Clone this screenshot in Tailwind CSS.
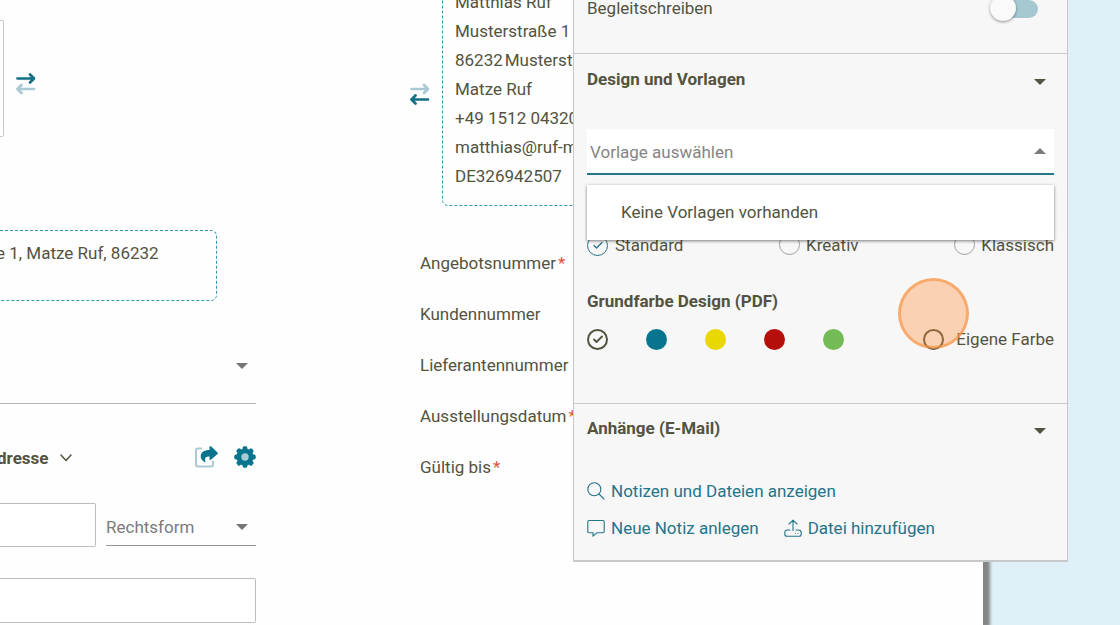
<!DOCTYPE html>
<html lang="de">
<head>
<meta charset="utf-8">
<title>Angebot erstellen</title>
<script src="https://cdn.jsdelivr.net/npm/@tailwindcss/browser@4"></script>
</head>
<body class="relative h-screen overflow-hidden bg-[#dff0f8] font-[Roboto,sans-serif] text-[17px] leading-6 text-[#53533f]">

<main class="mr-[137px] flex h-full items-start bg-[#fefefe] shadow-[5px_0_3px_2px_#858585]">

  <!-- Absender und Adresse -->
  <section class="w-64 shrink-0 pt-5">
    <div class="flex items-center gap-3">
      <div class="h-[117px] w-1 rounded-r-xs border border-l-0 border-[#c8c8c8]"></div>
      <button type="button" aria-label="Nach rechts übernehmen" class="mt-[10px]">
        <svg class="h-6 w-5" viewBox="0 0 20 24" fill="none" stroke-width="2.7" stroke-linecap="round" stroke-linejoin="round">
          <path stroke="#137087" d="M1.500 6.500H17.500M14 2.500L18 6.500L14 10.500"/>
          <path stroke="#a9c9d3" d="M18 17H2.500M5.500 13L1.500 17L5.500 21"/>
        </svg>
      </button>
    </div>
    <div class="mt-[93px] mr-[39px] h-[71px] rounded-r-md border border-l-0 border-dashed border-[#3397ae] pt-[10px] whitespace-nowrap"><div class="-ml-1">e 1, Matze Ruf, 86232</div></div>

    <div class="mt-7 grid items-center border-b border-[#b5b5b5]">
      <select aria-label="Absender" class="col-start-1 row-start-1 h-[74px] w-full appearance-none outline-none"><option></option></select>
      <svg class="pointer-events-none col-start-1 row-start-1 mr-2 h-[6px] w-3 justify-self-end" viewBox="0 0 12 6" fill="#757575"><path d="M0 0H12L6 6Z"/></svg>
    </div>

    <div class="mt-[38px] flex h-[30px] items-center">
      <button type="button" class="-ml-[3px] flex items-center gap-3 pt-[2px] font-bold">dresse
        <svg class="h-2 w-3" viewBox="0 0 12 8" fill="none" stroke="#53533f" stroke-width="1.500" stroke-linecap="round" stroke-linejoin="round"><path d="M1 1L6 6.500L11 1"/></svg>
      </button>
      <button type="button" aria-label="Teilen" class="mr-4 ml-auto">
        <svg class="h-[22px] w-6" viewBox="0 0 24 22" fill="none">
          <path d="M7 2.500H4Q2 2.500 2 4.500V18.500Q2 20.500 4 20.500H17Q19 20.500 19 18.500V15.500" stroke="#a9c9d3" stroke-width="2" stroke-linecap="round"/>
          <path d="M15.500 1.200C15.500 .4 16.500 0 17.200 .6L23.500 6.400C24 6.900 24 7.600 23.500 8L17.200 13.600C16.500 14.200 15.500 13.800 15.500 13V10.600C12 10.600 10.300 11.600 11.400 15.400C11.600 16 10.900 16.400 10.400 16C8.200 14.600 6.500 12.600 6.700 10C7 6 10.500 4.200 15.500 4.100Z" fill="#06758d"/>
        </svg>
      </button>
      <button type="button" aria-label="Einstellungen">
        <svg class="size-[22px]" viewBox="0 0 22 22">
          <g fill="#06758d">
            <circle cx="11" cy="11" r="8.600"/>
            <g id="teeth"><rect x="8.600" y="0.300" width="4.800" height="21.400" rx="1.600"/><rect x="0.300" y="8.600" width="21.400" height="4.800" rx="1.600"/></g>
            <use href="#teeth" transform="rotate(45 11 11)"/>
          </g>
          <circle cx="11" cy="11" r="3.700" fill="#a9c9d3"/>
        </svg>
      </button>
    </div>

    <div class="mt-[31px] flex gap-[10px]">
      <input type="text" aria-label="Firma" class="h-11 w-24 rounded-r-xs border border-l-0 border-[#bcbcbc] bg-white outline-none">
      <div class="grid h-[43px] flex-1 items-center border-b border-[#949494]">
        <select aria-label="Rechtsform" class="col-start-1 row-start-1 h-full w-full appearance-none pt-[6px] text-[#7b7b7b] outline-none"><option>Rechtsform</option></select>
        <svg class="pointer-events-none col-start-1 row-start-1 mt-[5px] mr-2 h-[6px] w-3 justify-self-end" viewBox="0 0 12 6" fill="#757575"><path d="M0 0H12L6 6Z"/></svg>
      </div>
    </div>
    <input type="text" aria-label="Name" class="mt-[31px] h-[45px] w-full rounded-r-xs border border-l-0 border-[#bcbcbc] bg-white outline-none">
  </section>

  <!-- Kundendaten und Angebotsangaben -->
  <section class="ml-[154px] flex-1 whitespace-nowrap">
    <div class="flex items-start gap-3">
      <button type="button" aria-label="Nach links übernehmen" class="mt-[82px]">
        <svg class="h-6 w-5" viewBox="0 0 20 24" fill="none" stroke-width="2.7" stroke-linecap="round" stroke-linejoin="round">
          <path stroke="#a9c9d3" d="M1.500 7H17.500M14 3L18 7L14 11"/>
          <path stroke="#137087" d="M18 17.500H2.500M5.500 13.500L1.500 17.500L5.500 21.500"/>
        </svg>
      </button>
      <address class="-mt-6 flex-1 rounded-md border border-dashed border-[#3397ae] px-3 pt-[11px] pb-[14px] leading-[29px] not-italic">
        Matthias Ruf<br>Musterstraße 1<br>86232<span class="ml-[2px]">Musterstadt</span><br>Matze Ruf<br>+49 1512 0432058<br>matthias@ruf-mail.de<br>DE326942507
      </address>
    </div>
    <ul class="mt-8 ml-[10px] leading-[51px]">
      <li>Angebotsnummer<span class="ml-[2px] text-[#e0523f]">*</span></li>
      <li>Kundennummer</li>
      <li>Lieferantennummer</li>
      <li>Ausstellungsdatum<span class="ml-[2px] text-[#e0523f]">*</span></li>
      <li>Gültig bis<span class="ml-[2px] text-[#e0523f]">*</span></li>
    </ul>
  </section>
</main>

<!-- Einstellungsmenü -->
<aside class="absolute top-0 right-[52px] w-[495px] border border-t-0 border-b-2 border-[#c6c8c9] bg-[#f7f7f7]">
  <section class="flex h-[54px] items-start border-b border-[#c6c8c9] px-[13px]">
    <label for="letter" class="-mt-1">Begleitschreiben</label>
    <input id="letter" type="checkbox" class="relative mr-4 ml-auto h-[18px] w-9 appearance-none rounded-full bg-[#a6c8d1] before:absolute before:-top-[5px] before:-left-3 before:size-[26px] before:rounded-full before:bg-[#fafafa] before:shadow-[0_1px_3px_#0000006b]">
  </section>

  <section class="border-b border-[#c6c8c9] px-[13px] pt-[13px] pb-[52px]">
    <button type="button" class="flex w-full items-center justify-between pr-2 font-bold">Design und Vorlagen
      <svg class="mt-[5px] h-[6px] w-3" viewBox="0 0 12 6" fill="#53533f"><path d="M0 0H12L6 6Z"/></svg>
    </button>
    <div class="relative mt-[38px] grid h-[46px] items-center border-b-2 border-[#24748a] bg-white">
      <select aria-label="Vorlage" class="col-start-1 row-start-1 h-full w-full appearance-none pl-[3px] pt-px text-[#858585] outline-none"><option>Vorlage auswählen</option></select>
      <svg class="pointer-events-none col-start-1 row-start-1 mr-2 h-[6px] w-3 justify-self-end" viewBox="0 0 12 6" fill="#7c7c7c"><path d="M0 6H12L6 0Z"/></svg>
      <ul role="listbox" aria-label="Vorlagen" class="absolute inset-x-0 top-14 z-10 bg-white shadow-[0_1px_3px_#00000080]">
        <li role="option" aria-selected="false" class="px-[34px] pt-[15px] pb-4">Keine Vorlagen vorhanden</li>
      </ul>
    </div>

    <div class="mt-[58px] flex items-center justify-between">
      <label class="flex items-center gap-[7px]">
        <span class="grid place-items-center *:col-start-1 *:row-start-1">
          <input type="radio" name="design" checked class="size-[21px] appearance-none rounded-full border border-[#24748a]">
          <svg class="pointer-events-none h-2 w-[10px]" viewBox="0 0 10 8" fill="none" stroke="#24748a" stroke-width="1.300" stroke-linecap="round" stroke-linejoin="round"><path d="M1 4.500L3.500 7L9 1.500"/></svg>
        </span>Standard</label>
      <label class="flex items-center gap-[6px]"><input type="radio" name="design" class="mb-[2px] size-[21px] appearance-none rounded-full border border-[#a0a0a0]">Kreativ</label>
      <label class="flex items-center gap-[6px]"><input type="radio" name="design" class="mb-[2px] size-[21px] appearance-none rounded-full border border-[#a0a0a0]">Klassisch</label>
    </div>

    <fieldset class="mt-8">
      <legend class="font-bold">Grundfarbe Design (PDF)</legend>
      <div class="mt-[14px] flex items-center gap-[38px]">
        <span class="grid place-items-center *:col-start-1 *:row-start-1">
          <input type="radio" name="color" checked aria-label="Standardfarbe" class="size-[21px] appearance-none rounded-full border-2 border-[#53533f]">
          <svg class="pointer-events-none h-2 w-[10px]" viewBox="0 0 10 8" fill="none" stroke="#53533f" stroke-width="1.800" stroke-linecap="round" stroke-linejoin="round"><path d="M1 4.500L3.500 7L9 1.500"/></svg>
        </span>
        <input type="radio" name="color" aria-label="Blau" class="size-[21px] appearance-none rounded-full bg-[#06758d]">
        <input type="radio" name="color" aria-label="Gelb" class="size-[21px] appearance-none rounded-full bg-[#e8d800]">
        <input type="radio" name="color" aria-label="Rot" class="size-[21px] appearance-none rounded-full bg-[#b40f0a]">
        <input type="radio" name="color" aria-label="Grün" class="size-[21px] appearance-none rounded-full bg-[#72bb55]">
        <label class="relative ml-auto flex items-center gap-3"><input type="radio" name="color" class="size-[21px] appearance-none rounded-full border-2 border-[#53533f]">Eigene Farbe
          <span class="pointer-events-none absolute -top-[49px] -left-[25px] size-[71px] rounded-full border-[3px] border-[#f79646]/65 bg-[#ff8a33]/35"></span>
        </label>
      </div>
    </fieldset>
  </section>

  <section class="px-[13px] pt-3 pb-5">
    <button type="button" class="flex w-full items-center justify-between pr-2 font-bold">Anhänge (E-Mail)
      <svg class="mt-[6px] h-[6px] w-3" viewBox="0 0 12 6" fill="#53533f"><path d="M0 0H12L6 6Z"/></svg>
    </button>
    <div class="mt-[39px] flex flex-wrap gap-x-[25px] gap-y-[13px] text-[#24748a]">
      <a href="#notizen" class="flex w-full items-center gap-[6px]">
        <svg class="size-[18px]" viewBox="0 0 18 18" fill="none" stroke="currentColor" stroke-width="1.100" stroke-linecap="round"><circle cx="7.300" cy="7.300" r="6.500"/><path d="M12 12L17 17"/></svg>
        Notizen und Dateien anzeigen</a>
      <a href="#neue-notiz" class="flex items-center gap-[6px]">
        <svg class="size-[18px]" viewBox="0 0 18 18" fill="none" stroke="currentColor" stroke-width="1.100" stroke-linejoin="round"><path d="M2 1.500H16Q17.200 1.500 17.200 2.700V12.500Q17.200 13.700 16 13.700H10L6 17.200V13.700H2Q.8 13.700 .8 12.500V2.700Q.8 1.500 2 1.500Z"/></svg>
        Neue Notiz anlegen</a>
      <a href="#datei" class="flex items-center gap-[6px]">
        <svg class="size-[18px]" viewBox="0 0 18 18" fill="none" stroke="currentColor" stroke-width="1.100" stroke-linecap="round" stroke-linejoin="round"><path d="M9 11.500V1.500M5 5L9 1.200L13 5M6 11H3.500Q.8 11 .8 13.500V15Q.8 17.300 3 17.300H15Q17.200 17.300 17.200 15V13.500Q17.200 11 14.500 11H12M11.500 14.300H11.600M14 14.300H14.100"/></svg>
        Datei hinzufügen</a>
    </div>
  </section>
</aside>
</body>
</html>
